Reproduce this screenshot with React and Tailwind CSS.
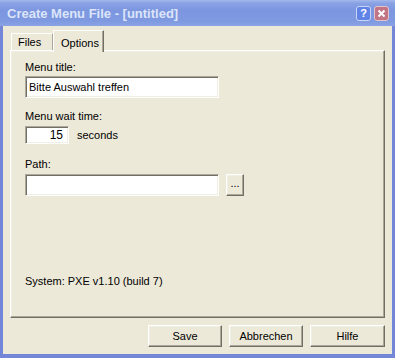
import React from 'react'

const raised =
  'border border-t-white border-l-white border-r-[#716f64] border-b-[#716f64] shadow-[inset_-1px_-1px_0_#aca899,inset_1px_1px_0_#f1efe2]'
const sunken =
  'border border-t-[#aca899] border-l-[#aca899] border-r-white border-b-white shadow-[inset_1px_1px_0_#716f64,inset_-1px_-1px_0_#f1efe2] bg-white'

function Field({ className = '', children }) {
  return <div className={`${sunken} flex items-center ${className}`}>{children}</div>
}

function Btn({ children, className = '' }) {
  return (
    <div className={`${raised} bg-[#ece9d8] flex items-center justify-center ${className}`}>
      {children}
    </div>
  )
}

export default function App() {
  return (
    <div
      className="w-[395px] h-[358px] flex flex-col text-[11px] text-black bg-[#ece9d8]"
      style={{ fontFamily: '"Liberation Sans", Arial, sans-serif' }}
    >
      {/* title bar */}
      <div className="h-[26px] shrink-0 flex items-center justify-between pl-[7px] pr-[6px] bg-[linear-gradient(180deg,#a4b8ec_0%,#8aa2e4_12%,#7c96e0_40%,#7f99e1_80%,#8aa3e4_100%)]">
        <span className="text-[13px] font-bold text-[#dce5f9] mt-[1px]">
          Create Menu File - [untitled]
        </span>
        <div className="flex gap-[3px] mt-[1px]">
          <div className="w-[15px] h-[15px] rounded-[3px] border border-[#c9d6f6] bg-[#5f83e6] flex items-center justify-center text-white text-[11px] font-bold leading-none">
            ?
          </div>
          <div className="w-[15px] h-[15px] rounded-[3px] border border-[#e2c4cc] bg-[#c27584] flex items-center justify-center">
            <svg width="9" height="9" viewBox="0 0 9 9">
              <path d="M1.5 1.5 L7.5 7.5 M7.5 1.5 L1.5 7.5" stroke="#fff" strokeWidth="2" />
            </svg>
          </div>
        </div>
      </div>

      {/* body */}
      <div className="flex-1 flex flex-col border-l-[3px] border-r-[3px] border-b-[4px] border-[#7386d8] bg-[#ece9d8] px-[7px]">
        {/* tabs */}
        <div className="h-[24px] flex items-end relative z-10">
          <div className="h-[17px] w-[42px] ml-[1px] border border-b-0 border-t-white border-l-white border-r-[#aca899] flex items-center pl-[6px]">
            Files
          </div>
          <div className="h-[22px] w-[51px] -mb-[2px] bg-[#ece9d8] border border-b-0 border-t-white border-l-white border-r-[#716f64] shadow-[inset_-1px_0_0_#aca899] flex items-start pt-[4px] pl-[7px]">
            Options
          </div>
        </div>

        {/* panel */}
        <div className={`h-[268px] ${raised} bg-[#ece9d8] pl-[14px] pt-[10px] flex flex-col`}>
          <div className="h-[13px] leading-[13px]">Menu title:</div>
          <Field className="mt-[2px] w-[194px] h-[22px] pl-[3px]">Bitte Auswahl treffen</Field>

          <div className="mt-[12px] h-[13px] leading-[13px]">Menu wait time:</div>
          <div className="mt-[3px] flex items-center gap-[8px]">
            <Field className="w-[44px] h-[18px] justify-end pr-[5px] text-[12px]">15</Field>
            <span>seconds</span>
          </div>

          <div className="mt-[14px] h-[13px] leading-[13px]">Path:</div>
          <div className="mt-[3px] flex gap-[7px]">
            <Field className="w-[194px] h-[22px]" />
            <Btn className="w-[18px] h-[22px] pb-[4px]">...</Btn>
          </div>

          <div className="mt-[79px] h-[13px] leading-[13px]">System: PXE v1.10 (build 7)</div>
        </div>

        {/* buttons */}
        <div className="mt-[7px] flex justify-end gap-[7px]">
          <Btn className="w-[74px] h-[22px]">Save</Btn>
          <Btn className="w-[74px] h-[22px]">Abbrechen</Btn>
          <Btn className="w-[75px] h-[22px]">Hilfe</Btn>
        </div>
      </div>
    </div>
  )
}
